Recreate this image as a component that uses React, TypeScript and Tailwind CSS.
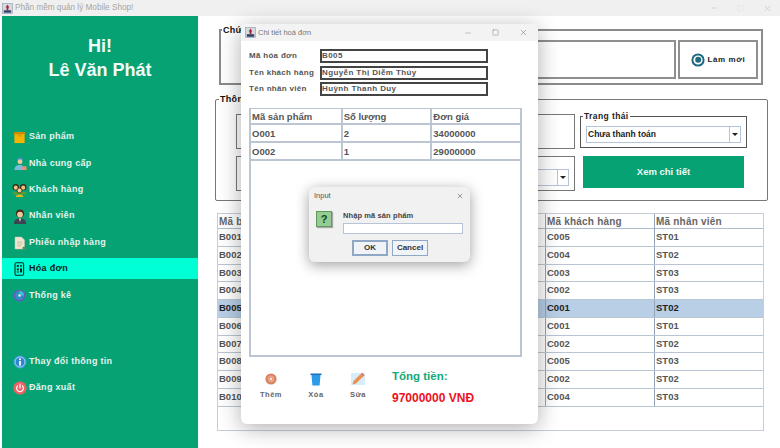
import { Minus, Square, X } from "lucide-react";

const font = { fontFamily: '"Liberation Sans", Arial, sans-serif' };

const invoices = [
  ["B001", "C005", "ST01"],
  ["B002", "C004", "ST02"],
  ["B003", "C003", "ST03"],
  ["B004", "C002", "ST03"],
  ["B005", "C001", "ST02"],
  ["B006", "C001", "ST01"],
  ["B007", "C002", "ST02"],
  ["B008", "C005", "ST03"],
  ["B009", "C002", "ST02"],
  ["B010", "C004", "ST03"],
];

function AppIcon() {
  return (
    <svg viewBox="0 0 12 12" className="h-[11px] w-[11px] shrink-0">
      <rect x="0.5" y="0.5" width="11" height="11" fill="#d5d9e2" stroke="#8a93a6" strokeWidth="0.6" />
      <path d="M6 1.5 L8 5 H7 V8 H5 V5 H4 Z" fill="#a52a2a" />
      <path d="M2 8 H10 V10.5 H2 Z" fill="#2f3d66" />
    </svg>
  );
}

function BoxIcon() {
  return (
    <svg viewBox="0 0 14 14" className="h-[13px] w-[13px]">
      <rect x="1" y="1" width="12" height="3" fill="#c98a05" />
      <rect x="1.5" y="3.5" width="11" height="9.5" fill="#f5b400" />
      <rect x="5" y="4" width="4" height="2" fill="#dc9a04" />
    </svg>
  );
}

function SupplierIcon() {
  return (
    <svg viewBox="0 0 14 16" className="h-[15px] w-[14px]">
      <path d="M4 4.5 A3 3 0 0 1 10 4.5 Z" fill="#3f8fc4" />
      <circle cx="7" cy="6" r="2.6" fill="#f2c6a0" />
      <path d="M1 15 C1 10.5 4 9.5 7 9.5 C10 9.5 11 11 11 15 Z" fill="#7db8e0" />
      <rect x="9.5" y="11" width="4.5" height="4" fill="#e8916a" />
    </svg>
  );
}

function CustomersIcon() {
  return (
    <svg viewBox="0 0 16 15" className="h-[14px] w-[15px]">
      <circle cx="4" cy="4.5" r="3.4" fill="#3b2a12" />
      <circle cx="12" cy="4.5" r="3.4" fill="#3b2a12" />
      <circle cx="4" cy="5" r="2.2" fill="#f0c38a" />
      <circle cx="12" cy="5" r="2.2" fill="#f0c38a" />
      <path d="M0.5 12 C0.5 8.5 7 8.5 7.5 12 Z" fill="#5f9e2e" />
      <path d="M8.5 12 C9 8.5 15.5 8.5 15.5 12 Z" fill="#5f9e2e" />
      <circle cx="8" cy="8" r="2.6" fill="#f4cf9c" stroke="#3b2a12" strokeWidth="0.8" />
      <path d="M4 15 C4 11 12 11 12 15 Z" fill="#e2b21f" />
    </svg>
  );
}

function EmployeeIcon() {
  return (
    <svg viewBox="0 0 14 15" className="h-[15px] w-[14px]">
      <circle cx="7" cy="4.5" r="4" fill="#4a2c17" />
      <circle cx="7" cy="5.6" r="2.9" fill="#f0c8a2" />
      <path d="M1 15 C1 10 4 9.5 7 9.5 C10 9.5 13 10 13 15 Z" fill="#3d4450" />
      <path d="M6 9.5 H8 L7 13 Z" fill="#e8e8e8" />
    </svg>
  );
}

function DocumentIcon() {
  return (
    <svg viewBox="0 0 12 14" className="h-[14px] w-[12px]">
      <path d="M1 1 H7.5 L10.5 4 V13 H1 Z" fill="#efe6d2" stroke="#c9bea6" strokeWidth="0.5" />
      <path d="M3 6 H8.5 M3 8 H8.5 M3 10 H7" stroke="#b9ad92" strokeWidth="0.7" />
      <circle cx="10" cy="12" r="1.6" fill="#5c8f5a" />
    </svg>
  );
}

function InvoiceIcon() {
  return (
    <svg viewBox="0 0 11 14" className="h-[14px] w-[11px]">
      <rect x="1" y="0.8" width="8.6" height="12.4" rx="1.2" fill="none" stroke="#0a2a22" strokeWidth="1.1" />
      <rect x="2.8" y="3" width="2" height="2" fill="#0a2a22" />
      <rect x="6" y="3.2" width="2" height="1.4" fill="#0a2a22" />
      <rect x="2.8" y="6.4" width="2" height="2" fill="#0a2a22" />
      <rect x="6" y="6.4" width="2" height="4" fill="#0a2a22" />
      <rect x="2.8" y="9.4" width="2" height="1.2" fill="#0a2a22" />
    </svg>
  );
}

function StatsIcon() {
  return (
    <svg viewBox="0 0 14 14" className="h-[13px] w-[13px]">
      <circle cx="7" cy="7" r="5.6" fill="#2f8fc0" stroke="#6a55c4" strokeWidth="1.4" />
      <path d="M7 7 L7 2 A5 5 0 0 1 12 7 Z" fill="#3dbfd0" />
      <circle cx="7" cy="7" r="1.4" fill="#d8ecf2" />
    </svg>
  );
}

function InfoIcon() {
  return (
    <svg viewBox="0 0 14 14" className="h-[14px] w-[14px]">
      <circle cx="7" cy="7" r="6.5" fill="#3f9de0" />
      <circle cx="7" cy="7" r="5" fill="#2d86d0" stroke="#bfe0f7" strokeWidth="0.8" />
      <rect x="6.1" y="6" width="1.8" height="4.6" fill="#fff" />
      <rect x="6.1" y="3.4" width="1.8" height="1.7" fill="#fff" />
    </svg>
  );
}

function PowerIcon() {
  return (
    <svg viewBox="0 0 14 14" className="h-[14px] w-[14px]">
      <circle cx="7" cy="7" r="6.6" fill="#ef5f63" />
      <path d="M4.6 4.8 A3.4 3.4 0 1 0 9.4 4.8" fill="none" stroke="#fff" strokeWidth="1.2" strokeLinecap="round" />
      <path d="M7 3 V7" stroke="#fff" strokeWidth="1.2" strokeLinecap="round" />
    </svg>
  );
}

const menuTop = [
  { label: "Sản phẩm", icon: <BoxIcon /> },
  { label: "Nhà cung cấp", icon: <SupplierIcon /> },
  { label: "Khách hàng", icon: <CustomersIcon /> },
  { label: "Nhân viên", icon: <EmployeeIcon /> },
  { label: "Phiếu nhập hàng", icon: <DocumentIcon /> },
  { label: "Hóa đơn", icon: <InvoiceIcon />, active: true },
  { label: "Thống kê", icon: <StatsIcon /> },
];

function MenuRow({ label, icon, active }: { label: string; icon: React.ReactNode; active?: boolean }) {
  return (
    <div
      className={`flex h-[21px] items-center gap-[1px] pl-[9px] text-[9px] font-bold tracking-[0.3px] ${
        active ? "bg-[#00ffd5] text-[#06241c]" : "text-[#e4f4ee]"
      }`}
    >
      <span className="flex w-[17px] shrink-0 justify-center">{icon}</span>
      <span>{label}</span>
    </div>
  );
}

function Sidebar() {
  return (
    <aside className="ml-[2px] flex w-[196px] shrink-0 flex-col bg-[#07a274]">
      <div className="pt-[18px] text-center text-[18px] font-bold leading-[24px] text-[#f3fbf8]">
        <div>Hi!</div>
        <div>Lê Văn Phát</div>
      </div>
      <div className="mt-[44.5px] flex flex-col gap-[5.4px]">
        {menuTop.map((item) => (
          <MenuRow key={item.label} {...item} />
        ))}
      </div>
      <div className="mt-[45.5px] flex flex-col gap-[5.4px]">
        <MenuRow label="Thay đổi thông tin" icon={<InfoIcon />} />
        <MenuRow label="Đăng xuất" icon={<PowerIcon />} />
      </div>
    </aside>
  );
}

function SelectBox({ label, className }: { label?: string; className: string }) {
  return (
    <div className={`flex h-[17px] border border-[#b5c4d8] bg-white ${className}`}>
      <span className="flex-1 pl-[1px] text-[8.5px] font-bold leading-[15px] text-[#222]">{label}</span>
      <span className="flex w-[11px] items-center justify-center border-l border-[#b5c4d8]">
        <span className="h-0 w-0 border-x-[3px] border-t-[3px] border-x-transparent border-t-[#222]" />
      </span>
    </div>
  );
}

function FiltersPanel() {
  return (
    <fieldset className="ml-[21px] mt-[10px] h-[59px] w-[544px] border-2 border-[#8b8b8b]">
      <legend className="ml-[1px] px-[1px] text-[9px] font-bold leading-[8px] tracking-[0.3px] text-[#111]">Chức năng</legend>
      <div className="ml-[20px] mr-[3px] mt-[6px] flex h-[39px] gap-[2px]">
        <div className="flex-1 border-2 border-[#8f8f8f]" />
        <div className="flex w-[80px] items-center justify-center gap-[3px] border-2 border-[#8f8f8f]">
          <svg viewBox="0 0 14 14" className="h-[14px] w-[14px]">
            <circle cx="7" cy="7" r="5.6" fill="none" stroke="#1f6a80" strokeWidth="2" />
            <circle cx="7.2" cy="6.8" r="3" fill="#1f6a80" />
          </svg>
          <span className="text-[8px] font-bold tracking-[0.6px] text-[#222]">Làm mới</span>
        </div>
      </div>
    </fieldset>
  );
}

function InfoPanel() {
  return (
    <fieldset className="ml-[17px] mt-[10px] h-[106px] w-[553px] rounded-[2px] border border-[#777]">
      <legend className="ml-[3px] px-[1px] text-[9px] font-bold leading-[8px] tracking-[0.3px] text-[#111]">Thông tin</legend>
      <div className="ml-[20px] mr-[20px] mt-[11px] grid grid-cols-[339px_1fr] gap-x-[5px] gap-y-[7px]">
        <div className="h-[35px] border border-[#777]" />
        <fieldset className="-mt-[2px] h-[36px] border border-[#555]">
          <legend className="ml-[2px] px-[1px] text-[8.5px] font-bold leading-[8px] tracking-[0.4px] text-[#222]">Trạng thái</legend>
          <SelectBox label="Chưa thanh toán" className="mx-[5px] mt-[6px]" />
        </fieldset>
        <div className="flex h-[35px] items-end justify-end border border-[#777] pb-[4px] pr-[5px]">
          <SelectBox className="w-[120px]" />
        </div>
        <div className="ml-[3px] flex h-[32px] w-[161px] items-center justify-center bg-[#07a274] pt-[1px] text-[9.5px] font-bold text-[#f0faf6]">
          Xem chi tiết
        </div>
      </div>
    </fieldset>
  );
}

function InvoiceTable() {
  return (
    <div className="ml-[19px] mt-[12px] h-[218px] w-[547px] border border-[#c6cdd8] bg-white">
      <div className="grid h-[15px] grid-cols-5 border-b border-[#aebccd] text-[10px] font-bold leading-[15px] tracking-[0.2px] text-[#666]">
        <span className="pl-[1px]">Mã bán hàng</span>
        <span />
        <span />
        <span className="border-l border-[#93a3b8] pl-[1px]">Mã khách hàng</span>
        <span className="border-l border-[#93a3b8] pl-[1px]">Mã nhân viên</span>
      </div>
      {invoices.map(([id, customer, staff]) => {
        const selected = id === "B005";
        return (
          <div
            key={id}
            className={`grid h-[17.75px] grid-cols-5 border-b border-[#b9c5d4] text-[9.5px] font-bold leading-[15px] ${
              selected ? "bg-[#b8cfe6] text-[#222]" : "text-[#555]"
            }`}
          >
            <span className="pl-[1px]">{id}</span>
            <span />
            <span />
            <span className="border-l border-[#93a3b8] pl-[1px]">{customer}</span>
            <span className="border-l border-[#93a3b8] pl-[1px]">{staff}</span>
          </div>
        );
      })}
    </div>
  );
}

function DetailField({ label, value }: { label: string; value: string }) {
  return (
    <div className="flex h-[14px] items-center">
      <span className="w-[71px] text-[8px] font-bold tracking-[0.3px] text-[#555]">{label}</span>
      <span className="h-[14px] w-[168px] border-2 border-[#444] text-[8px] font-bold leading-[10px] tracking-[0.4px] text-[#555]">
        {value}
      </span>
    </div>
  );
}

function DetailRow({ cells, header }: { cells: string[]; header?: boolean }) {
  return (
    <div
      className={`grid grid-cols-3 border-b-2 border-[#bcc6d3] font-bold text-[#555] ${
        header ? "h-[16px] border-b text-[9.5px] leading-[16px]" : "h-[18px] text-[9.5px] leading-[17px]"
      }`}
    >
      {cells.map((cell, i) => (
        <span key={cell} className={`pl-[1px] ${i > 0 ? "border-l-2 border-[#bcc6d3]" : ""}`}>
          {cell}
        </span>
      ))}
    </div>
  );
}

function ActionButton({ label, children }: { label: string; children: React.ReactNode }) {
  return (
    <div className="mt-[3px] flex w-[30px] flex-col items-center gap-[3px]">
      <span className="flex h-[14px] items-center">{children}</span>
      <span className="text-[7.5px] font-bold tracking-[0.5px] text-[#666]">{label}</span>
    </div>
  );
}

function DetailDialog() {
  return (
    <div className="absolute left-[241px] top-[24px] flex h-[400px] w-[297px] flex-col overflow-hidden rounded-[6px] bg-white shadow-[0_4px_22px_rgba(0,0,0,0.32)]">
      <div className="flex h-[17px] items-center bg-[#f3f3f3] pl-[4px]">
        <AppIcon />
        <span className="ml-[2px] flex-1 text-[7.5px] text-[#777]">Chi tiết hoá đơn</span>
        <Minus className="mr-[20px] h-[8px] w-[8px] text-[#888]" strokeWidth={1.5} />
        <Square className="mr-[20px] h-[7px] w-[7px] text-[#777]" strokeWidth={1.5} />
        <X className="mr-[10px] h-[9px] w-[9px] text-[#777]" strokeWidth={1.5} />
      </div>
      <div className="mt-[8px] flex flex-col gap-[2.5px] pl-[8px]">
        <DetailField label="Mã hóa đơn" value="B005" />
        <DetailField label="Tên khách hàng" value="Nguyễn Thị Diễm Thúy" />
        <DetailField label="Tên nhân viên" value="Huỳnh Thanh Duy" />
      </div>
      <div className="ml-[8px] mt-[12px] h-[249px] w-[273px] border-2 border-t border-[#bcc6d3] bg-white">
        <DetailRow header cells={["Mã sản phẩm", "Số lượng", "Đơn giá"]} />
        <DetailRow cells={["O001", "2", "34000000"]} />
        <DetailRow cells={["O002", "1", "29000000"]} />
      </div>
      <div className="mt-[12px] flex pl-[15px]">
        <ActionButton label="Thêm">
          <svg viewBox="0 0 12 12" className="h-[12px] w-[12px]">
            <circle cx="6" cy="6" r="5.6" fill="#d9825f" />
            <circle cx="6" cy="6" r="3.4" fill="#e6a184" />
            <circle cx="6" cy="6" r="1" fill="#fff" />
          </svg>
        </ActionButton>
        <span className="w-[15px]" />
        <ActionButton label="Xóa">
          <svg viewBox="0 0 12 14" className="h-[14px] w-[12px]">
            <path d="M0.5 1.5 H11.5 V3 H0.5 Z" fill="#1e6fb8" />
            <path d="M1.5 3 H10.5 L9.6 13.5 H2.4 Z" fill="#2b9be8" />
          </svg>
        </ActionButton>
        <span className="w-[12px]" />
        <ActionButton label="Sửa">
          <svg viewBox="0 0 14 14" className="h-[14px] w-[14px]">
            <rect x="0" y="1" width="14" height="12" fill="#d5eef9" />
            <path d="M1.5 12.5 L2.5 9 L10 1.8 L12.5 4.2 L5 11.5 Z" fill="#ef8f4e" />
            <path d="M10 1.8 L11 0.8 L13.5 3.2 L12.5 4.2 Z" fill="#d8596b" />
          </svg>
        </ActionButton>
        <div className="ml-[19px] flex flex-col">
          <span className="text-[11.5px] font-bold leading-[14px] text-[#12a877]">Tổng tiền:</span>
          <span className="mt-[8px] text-[12px] font-bold leading-[14px] text-[#f0101c]">97000000 VNĐ</span>
        </div>
      </div>
    </div>
  );
}

function InputDialog() {
  return (
    <div className="absolute left-[309px] top-[187px] flex h-[75px] w-[161px] flex-col rounded-[6px] bg-[#f1f1f1] shadow-[0_3px_14px_rgba(0,0,0,0.38)]">
      <div className="flex h-[18px] items-center justify-between pl-[5px] pr-[6px] text-[7.5px] text-[#555]">
        <span>Input</span>
        <X className="h-[8px] w-[8px] text-[#444]" strokeWidth={1.5} />
      </div>
      <div className="flex pl-[7px] pt-[6px]">
        <span className="flex h-[16px] w-[16px] items-center justify-center border border-[#5b9a5b] bg-[#94cc94] text-[11px] font-bold text-[#0c4a0c] shadow-[1px_1px_1px_rgba(0,0,0,0.3)]">
          ?
        </span>
        <div className="ml-[11px] flex flex-col">
          <span className="text-[7.5px] font-bold leading-[9px] tracking-[0.1px] text-[#444]">Nhập mã sản phẩm</span>
          <span className="mt-[3px] h-[11px] w-[120px] border border-[#b5c4d8] bg-white" />
        </div>
      </div>
      <div className="mt-[6px] flex gap-[4px] pl-[43px] text-[8px] font-bold text-[#333]">
        <span className="flex h-[16px] w-[36px] items-center justify-center border-2 border-[#8fa8c4] bg-[#f0f3f7]">OK</span>
        <span className="flex h-[16px] w-[36px] items-center justify-center border border-[#8fa8c4] bg-[#f0f3f7]">Cancel</span>
      </div>
    </div>
  );
}

export default function App() {
  return (
    <div className="relative flex h-[448px] w-[780px] flex-col overflow-hidden bg-white" style={font}>
      <header className="flex h-[16px] shrink-0 items-center bg-[#f0f0f0] pl-[2px]">
        <AppIcon />
        <span className="ml-[2px] flex-1 text-[8.2px] text-[#a5a5a5]">Phần mềm quản lý Mobile Shop!</span>
        <Minus className="mr-[19px] h-[8px] w-[8px] text-[#bbb]" strokeWidth={1.5} />
        <Square className="mr-[19px] h-[7px] w-[7px] text-[#ddd]" strokeWidth={1.5} />
        <X className="mr-[8px] h-[9px] w-[9px] text-[#bbb]" strokeWidth={1.5} />
      </header>
      <div className="flex flex-1">
        <Sidebar />
        <main className="flex-1">
          <FiltersPanel />
          <InfoPanel />
          <InvoiceTable />
        </main>
      </div>
      <DetailDialog />
      <InputDialog />
    </div>
  );
}
